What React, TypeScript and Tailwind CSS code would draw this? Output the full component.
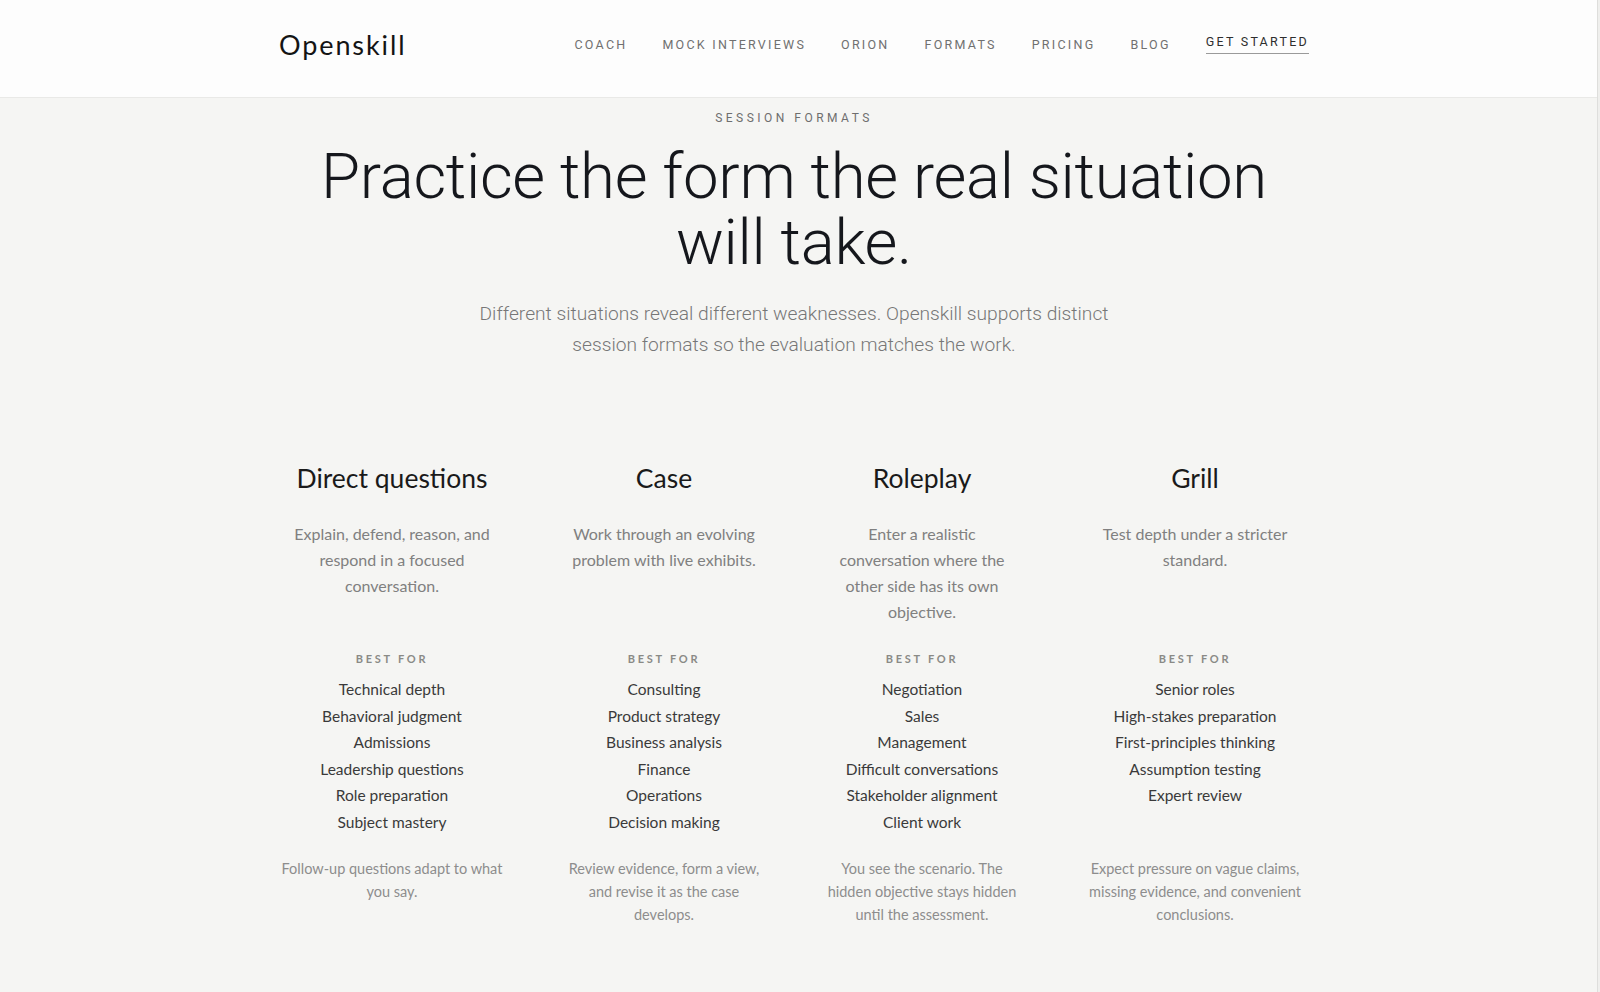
import React from 'react';

interface Format {
  title: string;
  description: string;
  bestFor: string[];
  note: string;
}

const navLinks = ['Coach', 'Mock interviews', 'Orion', 'Formats', 'Pricing', 'Blog'];

const formats: Format[] = [
  {
    title: 'Direct questions',
    description: 'Explain, defend, reason, and respond in a focused conversation.',
    bestFor: [
      'Technical depth',
      'Behavioral judgment',
      'Admissions',
      'Leadership questions',
      'Role preparation',
      'Subject mastery',
    ],
    note: 'Follow-up questions adapt to what you say.',
  },
  {
    title: 'Case',
    description: 'Work through an evolving problem with live exhibits.',
    bestFor: ['Consulting', 'Product strategy', 'Business analysis', 'Finance', 'Operations', 'Decision making'],
    note: 'Review evidence, form a view, and revise it as the case develops.',
  },
  {
    title: 'Roleplay',
    description: 'Enter a realistic conversation where the other side has its own objective.',
    bestFor: [
      'Negotiation',
      'Sales',
      'Management',
      'Difficult conversations',
      'Stakeholder alignment',
      'Client work',
    ],
    note: 'You see the scenario. The hidden objective stays hidden until the assessment.',
  },
  {
    title: 'Grill',
    description: 'Test depth under a stricter standard.',
    bestFor: [
      'Senior roles',
      'High-stakes preparation',
      'First-principles thinking',
      'Assumption testing',
      'Expert review',
    ],
    note: 'Expect pressure on vague claims, missing evidence, and convenient conclusions.',
  },
];

const body = "font-['Lato','Noto_Sans',sans-serif]";
const display = "font-['Roboto','Liberation_Sans',sans-serif]";

export default function App() {
  return (
    <div className="flex min-h-[992px] w-full bg-[#f5f5f3]">
      <div className="flex min-w-0 flex-1 flex-col">
        {/* Header */}
        <header className="h-[98px] border-b border-[#e9e9e7] bg-[#fdfdfd] pr-[9px]">
          <div className="mx-auto flex h-full w-[1030px] items-center justify-between">
            <div className={`${body} pb-[6px] text-[27px] tracking-[0.07em] text-[#141414]`}>Openskill</div>
            <nav
              className={`${display} flex items-center gap-[35px] pb-[6px] text-[12.5px] uppercase tracking-[0.18em] text-[#707070]`}
            >
              {navLinks.map((link) => (
                <a key={link} href="#" className="leading-none">
                  {link}
                </a>
              ))}
              <a href="#" className="-mt-[1px] border-b border-[#9a9a9a] pb-[5px] leading-none text-[#2e2e2e]">
                Get started
              </a>
            </nav>
          </div>
        </header>

        {/* Intro */}
        <main className="pr-[9px]">
          <section className="mx-auto flex w-[1030px] flex-col items-center pt-[12px] text-center">
            <div className={`${display} text-[12px] uppercase leading-[16px] tracking-[0.29em] text-[#6e6e6e]`}>
              Session formats
            </div>
            <h1
              className={`${display} mt-[18px] text-[63.5px] font-light leading-[66px] tracking-[-0.005em] text-[#15171c]`}
            >
              Practice the form the real situation
              <br />
              will take.
            </h1>
            <p className={`${display} mt-[22px] max-w-[650px] text-[19.2px] font-light leading-[31px] text-[#777777]`}>
              Different situations reveal different weaknesses. Openskill supports distinct session formats so
              the evaluation matches the work.
            </p>
          </section>

          {/* Formats */}
          <section
            className={`${body} mx-auto mt-[100px] grid w-[1030px] grid-cols-[226px_198px_198px_228px] justify-between text-center`}
          >
            {formats.map((f) => (
              <h2 key={f.title} className="text-[26.5px] leading-[36px] text-[#1a1a1a]">
                {f.title}
              </h2>
            ))}
            {formats.map((f) => (
              <p
                key={f.title + '-d'}
                className="mx-auto mt-[25px] max-w-[212px] text-[16px] leading-[26px] text-[#808080]"
              >
                {f.description}
              </p>
            ))}
            {formats.map((f) => (
              <div
                key={f.title + '-l'}
                className="mt-[26px] text-[11px] font-bold uppercase leading-[16px] tracking-[0.25em] text-[#8a8a86]"
              >
                Best for
              </div>
            ))}
            {formats.map((f) => (
              <ul key={f.title + '-b'} className="mt-[9px] text-[15.5px] leading-[26.5px] text-[#3a3a3a]">
                {f.bestFor.map((item) => (
                  <li key={item}>{item}</li>
                ))}
              </ul>
            ))}
            {formats.map((f) => (
              <p key={f.title + '-n'} className="mt-[22px] text-[14.5px] leading-[23px] text-[#8d8d8d]">
                {f.note}
              </p>
            ))}
          </section>
        </main>
      </div>
      <div className="w-[3px] shrink-0 border-l border-[#dededc] bg-[#efefed]" />
    </div>
  );
}
